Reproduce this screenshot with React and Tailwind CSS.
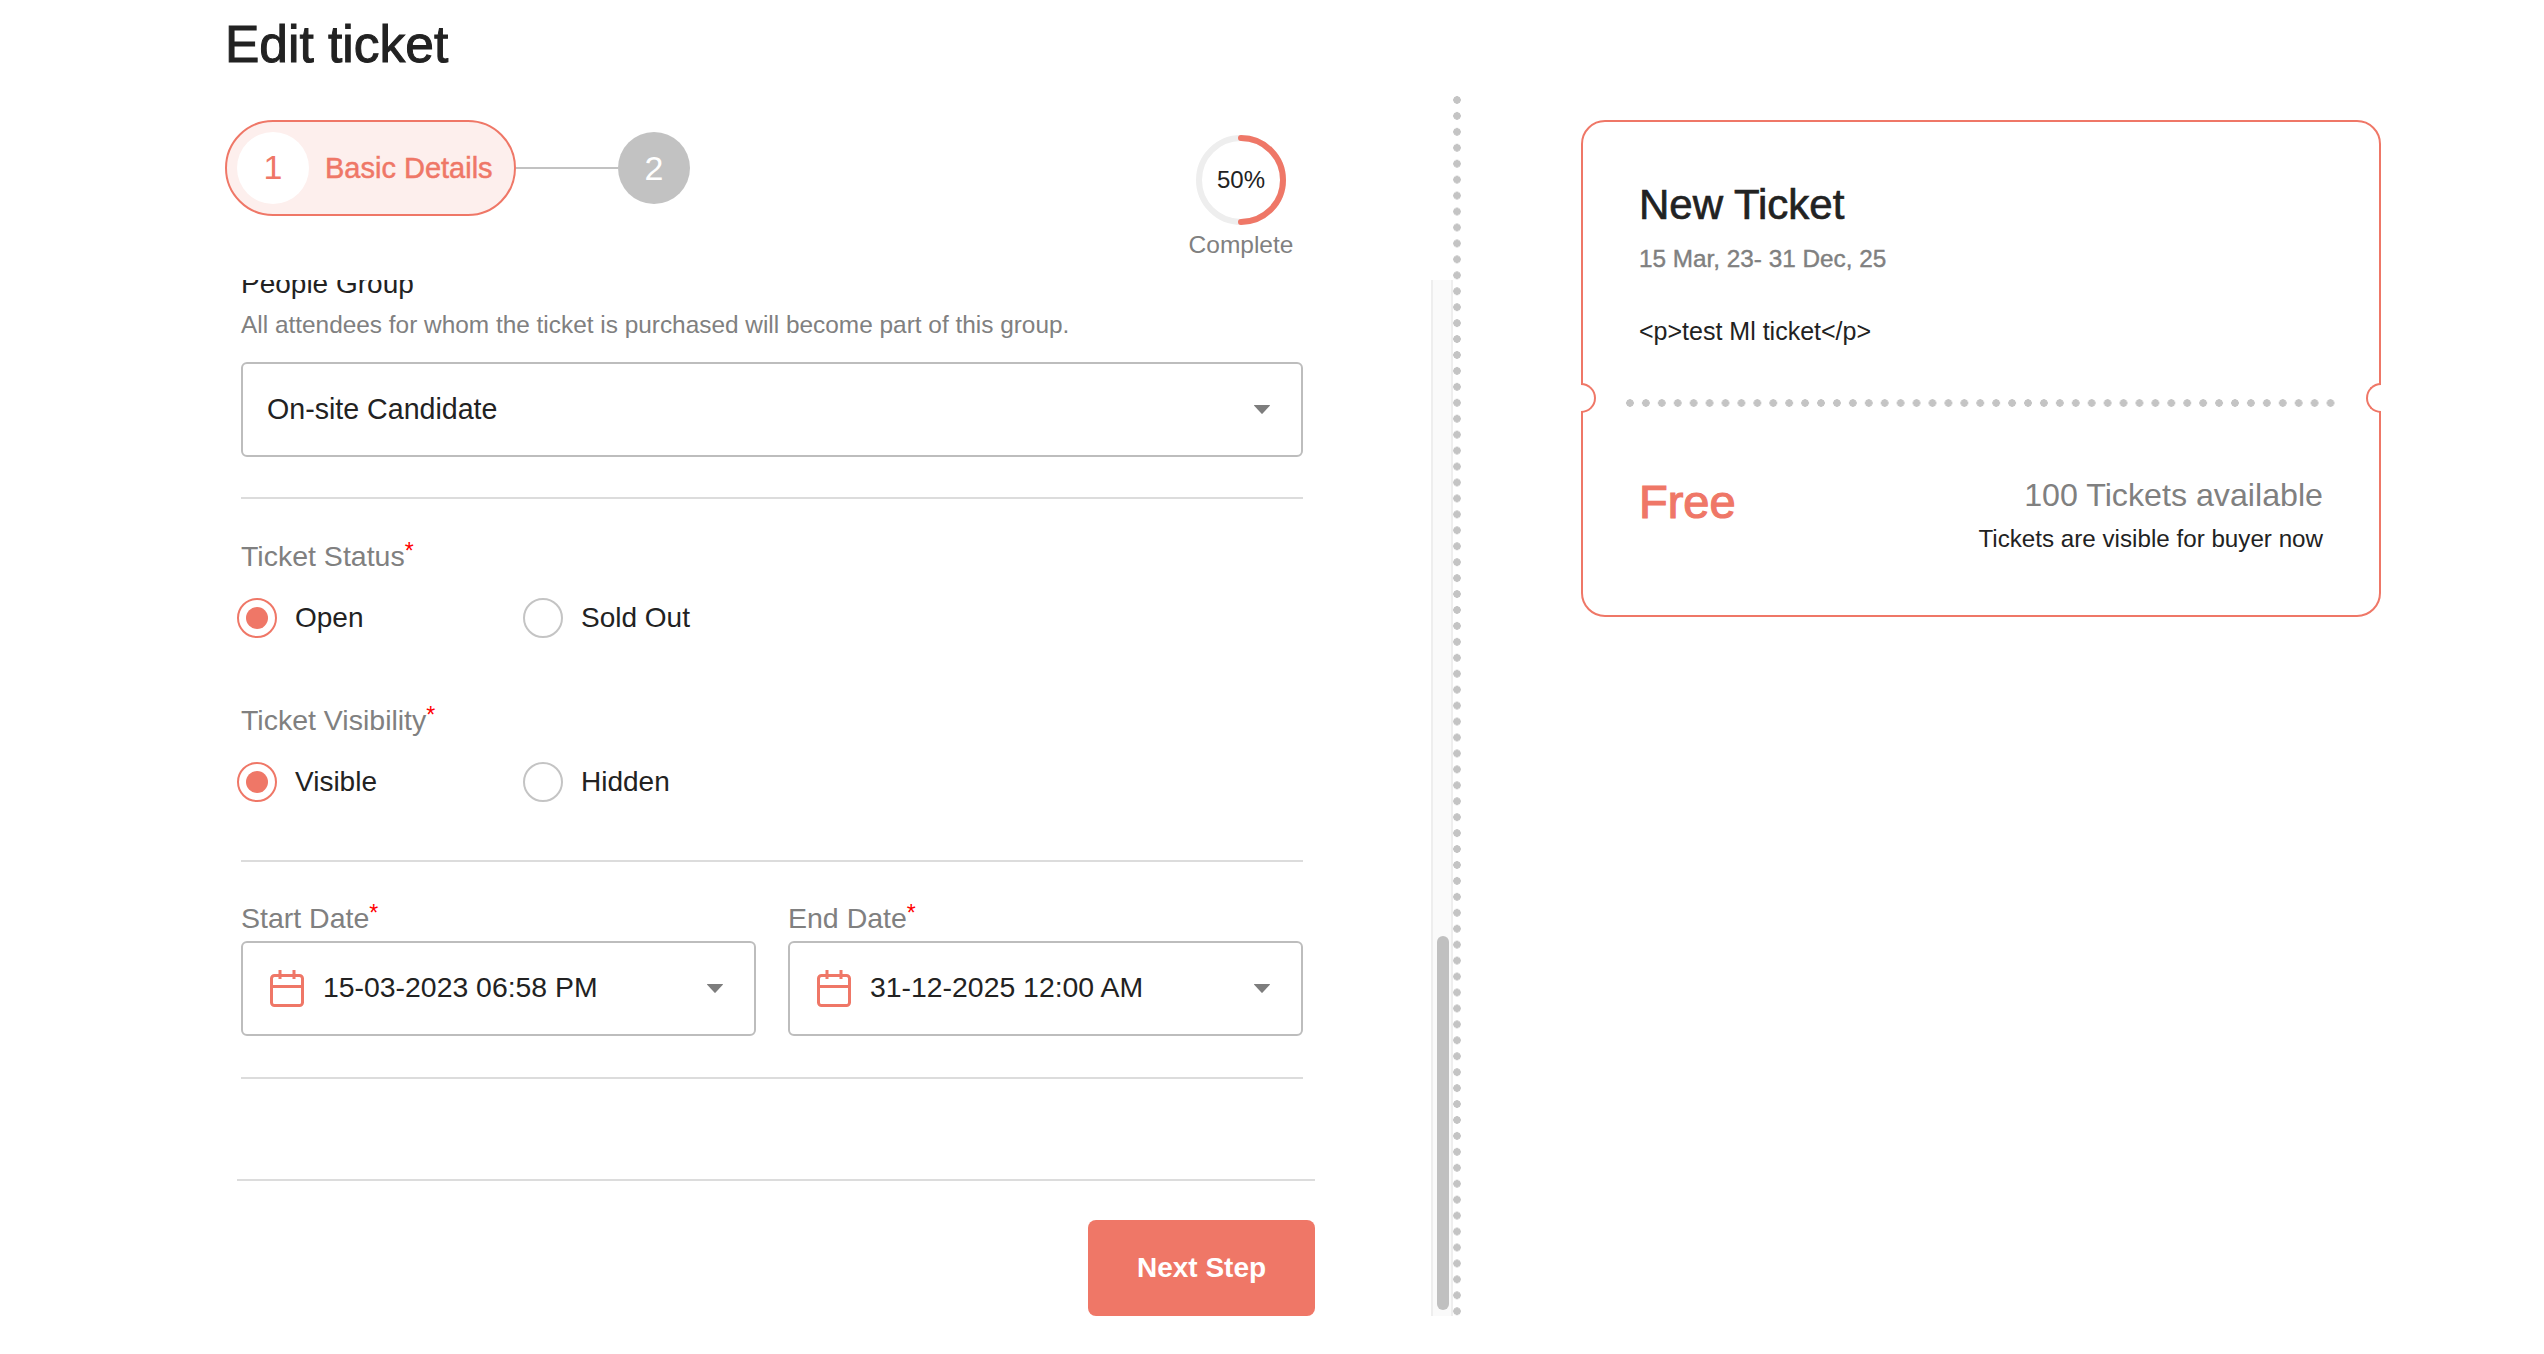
import React from "react";

const F = { fontFamily: '"Liberation Sans", Arial, sans-serif' };

function Caret() {
  return (
    <svg width="18" height="11" viewBox="0 0 18 11" className="shrink-0">
      <path d="M1.5 1 L16.5 1 Q17.5 1 16.8 1.8 L9.6 9.6 Q9 10.2 8.4 9.6 L1.2 1.8 Q0.5 1 1.5 1 Z" fill="#7d7d7d" />
    </svg>
  );
}

function Cal() {
  return (
    <svg width="34" height="37" viewBox="0 0 34 37" fill="none" stroke="#ef7767" strokeWidth="3" className="shrink-0">
      <rect x="1.5" y="5.5" width="31" height="30" rx="3" />
      <path d="M1.5 16.5 H32.5 M10 0 V9 M24 0 V9" />
    </svg>
  );
}

function Radio({ on, label, w }) {
  return (
    <div className="flex items-center gap-[18px]" style={{ width: w }}>
      <div className={`w-[40px] h-[40px] rounded-full border-2 flex items-center justify-center ${on ? "border-[#ef7767]" : "border-[#c4c4c4]"}`}>
        {on && <div className="w-[22px] h-[22px] rounded-full bg-[#ef7767]" />}
      </div>
      <span className="text-[28px] leading-[34px] text-[#222]">{label}</span>
    </div>
  );
}

function Label({ children }) {
  return (
    <div className="text-[28.5px] leading-[34px] text-[#808080]">
      {children}
      <sup className="text-[#ff0000] text-[23px] top-[-0.3em]">*</sup>
    </div>
  );
}

export default function App() {
  return (
    <div className="w-[2544px] h-[1354px] bg-white overflow-hidden flex" style={F}>
      <div className="w-[1431px] shrink-0 pl-[225px] flex flex-col">
        <h1 className="text-[51.5px] leading-[56px] text-[#222] mt-[16px] [-webkit-text-stroke:1px_#222]">Edit ticket</h1>
        <div className="flex mt-[48px] h-[160px] w-[1080px] justify-between">
          <div className="flex items-center h-[96px]">
            <div className="flex items-center w-[291px] h-[96px] rounded-[48px] border-2 border-[#ef7767] bg-[#fdefed] pl-[10px]">
              <div className="w-[72px] h-[72px] rounded-full bg-white flex items-center justify-center text-[34px] leading-[34px] pb-[2px] text-[#ef7767]">1</div>
              <span className="ml-[16px] pt-[2px] text-[29px] text-[#ef7767] [-webkit-text-stroke:0.5px_#ef7767] whitespace-nowrap">Basic Details</span>
            </div>
            <div className="w-[102px] h-[2px] bg-[#c2c2c2]" />
            <div className="w-[72px] h-[72px] rounded-full bg-[#c2c2c2] flex items-center justify-center text-white text-[34px]">2</div>
          </div>
          <div className="flex flex-col items-center pt-[15px] w-[128px]">
            <div className="relative w-[90px] h-[90px]">
              <svg width="90" height="90" viewBox="0 0 90 90">
                <circle cx="45" cy="45" r="42" fill="none" stroke="#eeeeee" strokeWidth="6" />
                <path d="M45 3 A42 42 0 0 1 45 87" fill="none" stroke="#ef7767" strokeWidth="6" strokeLinecap="round" />
              </svg>
              <div className="absolute inset-0 flex items-center justify-center text-[24px] text-[#222]">50%</div>
            </div>
            <div className="text-[24.5px] leading-[30px] text-[#808080] mt-[5px] whitespace-nowrap">Complete</div>
          </div>
        </div>
        <div className="h-[903px] w-[1090px] overflow-hidden pl-[16px] flex flex-col shrink-0">
          <div className="text-[28px] leading-[34px] text-[#222] -mt-[13px] shrink-0">People Group</div>
          <div className="text-[24.4px] leading-[30px] text-[#808080] mt-[9px]">All attendees for whom the ticket is purchased will become part of this group.</div>
          <div className="mt-[22px] w-[1062px] h-[95px] shrink-0 rounded-[6px] border-2 border-[#bdbdbd] flex items-center justify-between pl-[24px] pr-[30px] text-[28.6px] text-[#222]">
            On-site Candidate <Caret />
          </div>
          <div className="w-[1062px] h-[2px] bg-[#dcdcdc] mt-[40px] shrink-0" />
          <div className="mt-[40px]"><Label>Ticket Status</Label></div>
          <div className="flex mt-[25px] -ml-[4px]">
            <Radio on label="Open" w={286} />
            <Radio label="Sold Out" w={300} />
          </div>
          <div className="mt-[65px]"><Label>Ticket Visibility</Label></div>
          <div className="flex mt-[25px] -ml-[4px]">
            <Radio on label="Visible" w={286} />
            <Radio label="Hidden" w={300} />
          </div>
          <div className="w-[1062px] h-[2px] bg-[#dcdcdc] mt-[58px] shrink-0" />
          <div className="flex gap-[32px] mt-[39px] w-[1062px]">
            {[["Start Date", "15-03-2023 06:58 PM"], ["End Date", "31-12-2025 12:00 AM"]].map(([l, v]) => (
              <div key={l} className="flex-1">
                <Label>{l}</Label>
                <div className="mt-[6px] h-[95px] rounded-[6px] border-2 border-[#bdbdbd] flex items-center pl-[27px] pr-[30px] text-[28.4px] text-[#222]">
                  <Cal />
                  <span className="ml-[19px] flex-1 pb-[2px]">{v}</span>
                  <Caret />
                </div>
              </div>
            ))}
          </div>
          <div className="w-[1062px] h-[2px] bg-[#dcdcdc] mt-[41px] shrink-0" />
          <div className="w-[1078px] h-[2px] bg-[#dcdcdc] mt-[100px] -ml-[4px] shrink-0" />
        </div>
        <div className="w-[1090px] flex justify-end mt-[37px]">
          <button className="w-[227px] h-[96px] rounded-[8px] bg-[#ef7767] text-white text-[28px] font-bold">Next Step</button>
        </div>
      </div>
      <div className="relative w-[22px] mt-[280px] h-[1036px] shrink-0 border-x-2 border-[#eeeeee] bg-[#fafafa]">
        <div className="absolute left-[4px] bottom-[6px] w-[12px] h-[374px] rounded-full bg-[#c0c0c0]" />
      </div>
      <div className="w-[8px] h-[1224px] mt-[92px] shrink-0 bg-[radial-gradient(circle,#c4c4c4_3.5px,transparent_4px)] bg-[length:8px_15.94px]" />
      <div className="ml-[120px] mt-[120px] relative w-[800px] h-[497px] rounded-[24px] border-2 border-[#ef7767] pl-[56px] pr-[56px] pt-[58px]">
        <div className="text-[42px] leading-[50px] text-[#222] [-webkit-text-stroke:0.7px_#222]">New Ticket</div>
        <div className="text-[24.3px] leading-[30px] text-[#808080] mt-[14px] [-webkit-text-stroke:0.4px_#808080]">15 Mar, 23- 31 Dec, 25</div>
        <div className="text-[25px] leading-[30px] text-[#222] mt-[42px]">&lt;p&gt;test Ml ticket&lt;/p&gt;</div>
        <div className="absolute left-[39px] top-[277px] w-[717px] h-[8px] bg-[radial-gradient(circle,#c4c4c4_3.5px,transparent_4px)] bg-[length:15.93px_8px]" />
        <div className="absolute -left-[2px] top-[261px] w-[15px] h-[30px] rounded-r-full border-2 border-l-0 border-[#ef7767] bg-white" />
        <div className="absolute -right-[2px] top-[261px] w-[15px] h-[30px] rounded-l-full border-2 border-r-0 border-[#ef7767] bg-white" />
        <div className="absolute left-[56px] right-[56px] top-[350px] flex justify-between">
          <div className="text-[47px] leading-[60px] text-[#ef7767] [-webkit-text-stroke:1.2px_#ef7767]">Free</div>
          <div className="text-right">
            <div className="text-[32.2px] leading-[40px] text-[#808080] mt-[3px]">100 Tickets available</div>
            <div className="text-[24.2px] leading-[30px] text-[#222] mt-[9px]">Tickets are visible for buyer now</div>
          </div>
        </div>
      </div>
    </div>
  );
}
